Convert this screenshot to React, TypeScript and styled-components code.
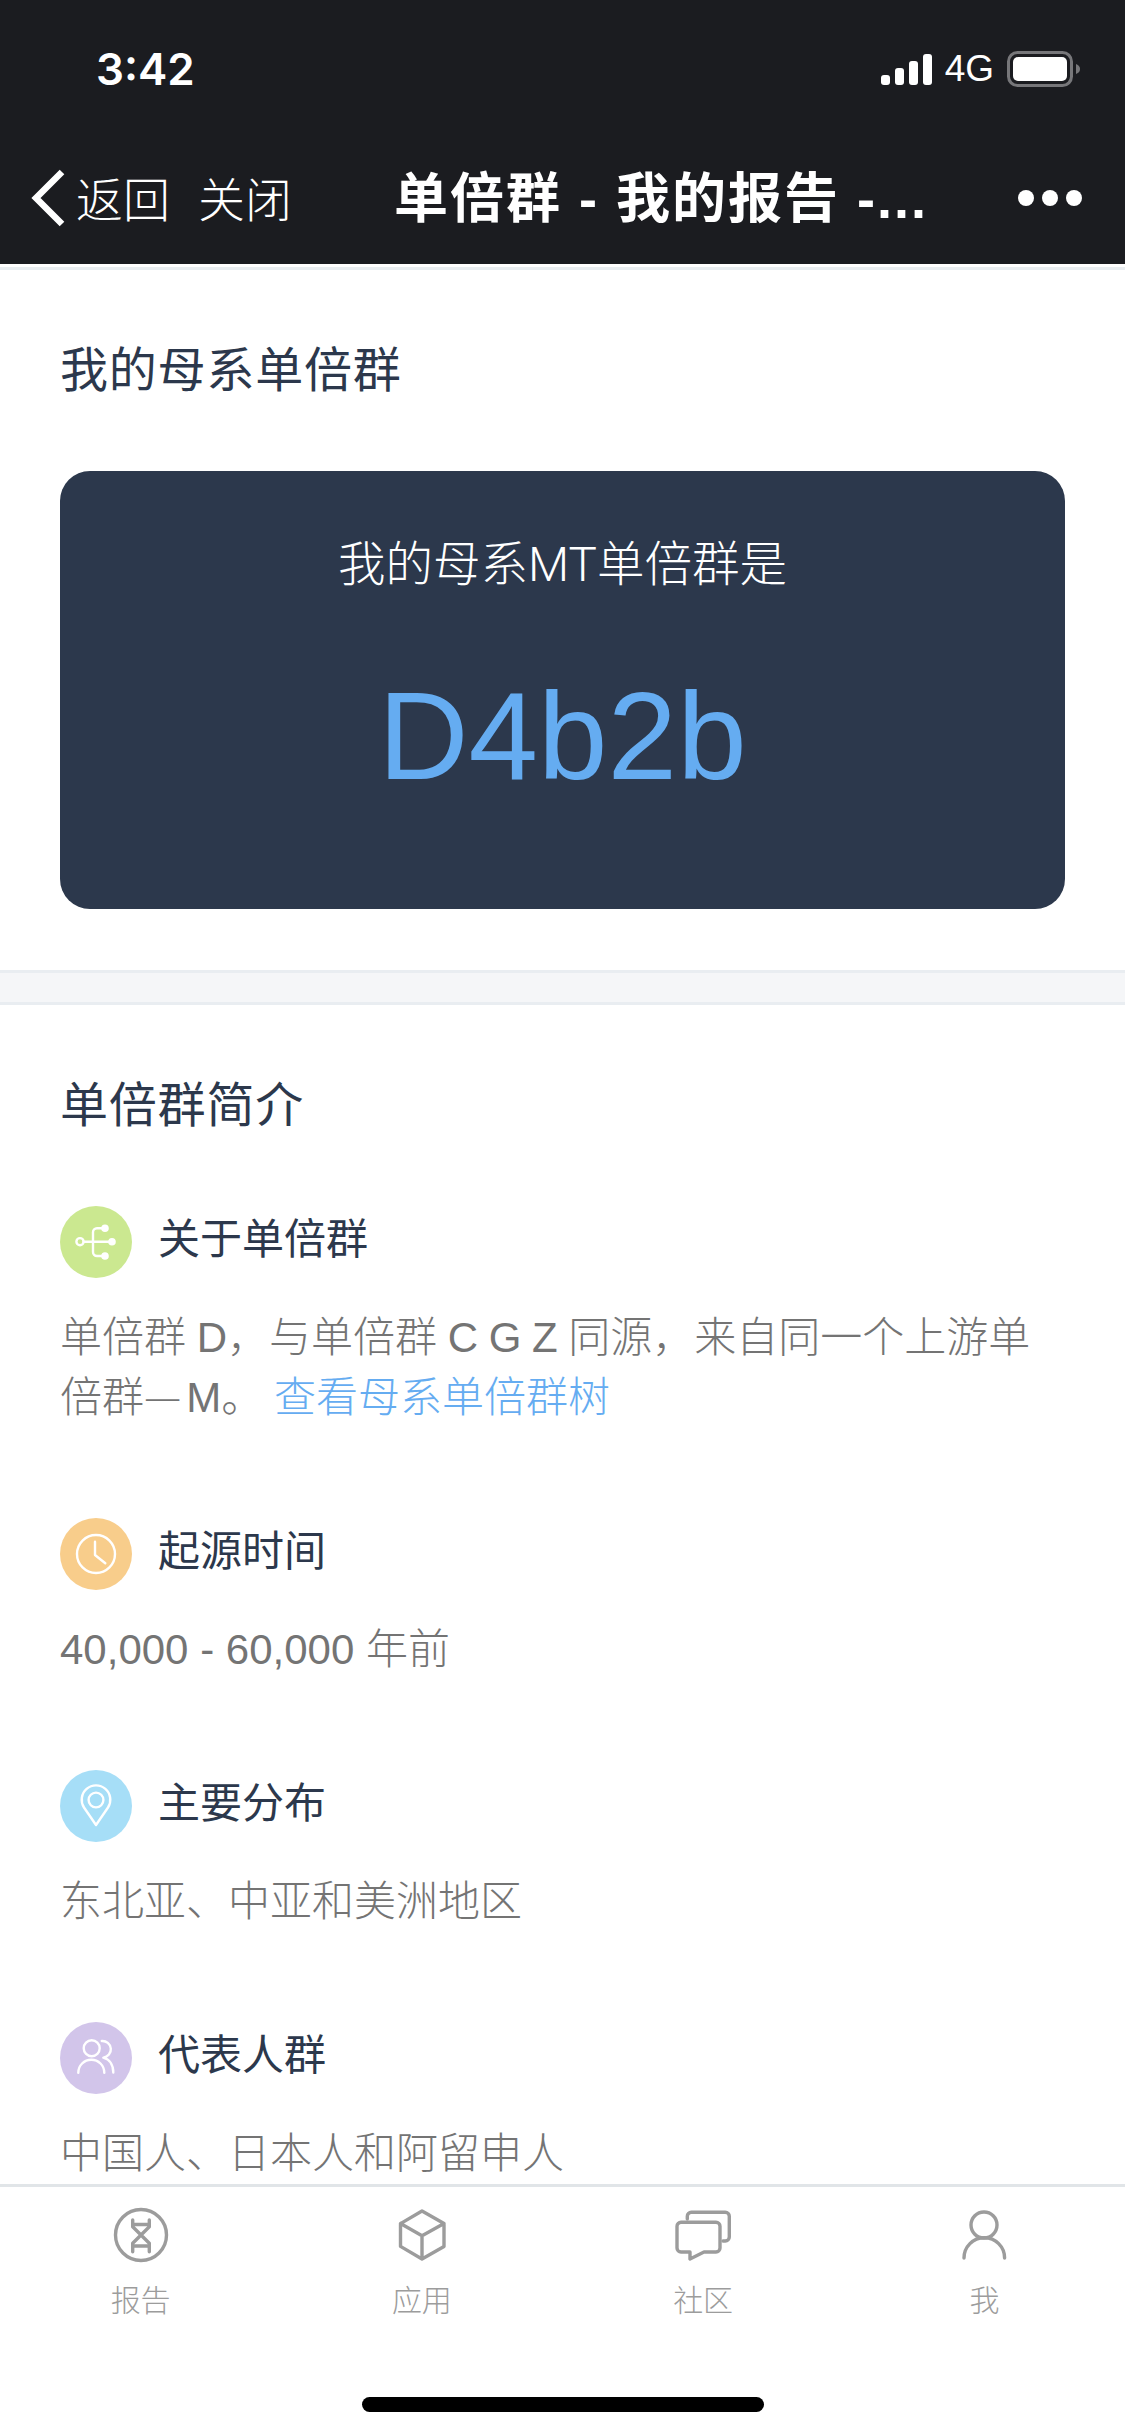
import React from 'react';
import styled, { createGlobalStyle } from 'styled-components';

const GlobalStyle = createGlobalStyle`
  html, body {
    margin: 0;
    padding: 0;
    background: #fff;
  }
  * {
    box-sizing: border-box;
  }
`;

const fontStack = `"Liberation Sans", "Noto Sans CJK SC", sans-serif`;
const lightStack = `Roboto, "Noto Sans CJK SC", sans-serif`;

const Page = styled.div`
  width: 1125px;
  height: 2436px;
  display: flex;
  flex-direction: column;
  overflow: hidden;
  background: #fff;
  font-family: ${fontStack};
`;

const Header = styled.header`
  height: 264px;
  flex: none;
  background: #1b1c20;
  color: #fff;
`;

const StatusBar = styled.div`
  height: 132px;
  padding: 44px 44px 0 96px;
  display: flex;
  justify-content: space-between;
  align-items: flex-start;
`;

const Time = styled.span`
  font-family: Inter, sans-serif;
  font-size: 44px;
  line-height: 50px;
  font-weight: 600;
`;

const StatusIcons = styled.div`
  display: flex;
  align-items: center;
  height: 50px;
  gap: 13px;
`;

const Signal = styled.div`
  display: flex;
  align-items: flex-end;
  gap: 5px;
  height: 31px;
`;

const SignalBar = styled.i<{ $h: number }>`
  width: 9px;
  height: ${p => p.$h}px;
  border-radius: 3px;
  background: #fff;
`;

const NetworkLabel = styled.span`
  font-size: 37px;
  line-height: 40px;
`;

const Battery = styled.svg`
  width: 74px;
  height: 36px;
  display: block;
`;

const NavBar = styled.nav`
  height: 132px;
  padding: 0 43px 0 30px;
  display: flex;
  align-items: center;
`;

const Chevron = styled.svg`
  width: 36px;
  height: 58px;
  flex: none;
  margin-right: 10px;
`;

const NavLink = styled.span`
  font-size: 47px;
  line-height: 60px;
  font-weight: 300;
  margin: 5px 28px 0 0;
`;

const NavTitle = styled.h1`
  margin: 2px 0 0 74px;
  font-size: 54px;
  line-height: 70px;
  font-weight: 700;
  letter-spacing: 2px;
  white-space: nowrap;
`;

const MoreDots = styled.div`
  margin-left: auto;
  display: flex;
  gap: 8px;
`;

const Dot = styled.i`
  width: 16px;
  height: 16px;
  border-radius: 50%;
  background: #fff;
`;

const Content = styled.main`
  flex: 1;
  min-height: 0;
  overflow: hidden;
  border-top: 3px solid #fff;
`;

const Section = styled.section<{ $pad: string }>`
  padding: ${p => p.$pad};
`;

const TopLine = styled.div`
  height: 3px;
  background: #e9edf1;
`;

const SectionTitle = styled.h2`
  margin: 0;
  font-size: 48px;
  line-height: 60px;
  font-weight: 400;
  letter-spacing: 0.8px;
  color: #2c384c;
`;

const HaploCard = styled.div`
  margin-top: 70px;
  height: 438px;
  border-radius: 30px;
  background: #2c384c;
  color: #fff;
  text-align: center;
  padding-top: 64px;
`;

const CardLabel = styled.div`
  font-family: ${lightStack};
  font-size: 47.5px;
  line-height: 60px;
  font-weight: 300;
`;

const HaploName = styled.div`
  margin-top: 66px;
  font-size: 125px;
  line-height: 150px;
  color: #65acf1;
`;

const Separator = styled.div`
  height: 35px;
  background: #f5f6f8;
  border-top: 3px solid #e9edf1;
  border-bottom: 3px solid #e9edf1;
`;

const InfoList = styled.div`
  margin-top: 70px;
  display: flex;
  flex-direction: column;
  gap: 90px;
`;

const InfoItem = styled.article`
  display: flex;
  flex-direction: column;
  gap: 30px;
`;

const InfoHead = styled.div`
  display: flex;
  align-items: center;
  gap: 26px;
`;

const IconCircle = styled.div<{ $color: string }>`
  width: 72px;
  height: 72px;
  border-radius: 50%;
  flex: none;
  background: ${p => p.$color};
`;

const CircleSvg = styled.svg`
  display: block;
  width: 72px;
  height: 72px;
  fill: none;
  stroke: #fff;
  stroke-width: 2.4;
  stroke-linecap: round;
  stroke-linejoin: round;
`;

const InfoTitle = styled.h3`
  margin: 0;
  padding-bottom: 4px;
  font-size: 42px;
  line-height: 60px;
  font-weight: 400;
  color: #2c384c;
`;

const InfoText = styled.p<{ $tight?: boolean }>`
  margin: 0;
  font-size: 42px;
  line-height: 60px;
  font-weight: 300;
  word-spacing: ${p => (p.$tight ? '-1px' : '0')};
  color: #747474;
`;

const CjkDash = styled.span`
  font-family: "Noto Sans CJK SC", sans-serif;
  line-height: 0;
  margin-right: 5px;
`;

const InfoLink = styled.a`
  color: #65acf1;
  text-decoration: none;
`;

const TabBar = styled.footer`
  height: 252px;
  flex: none;
  background: #fff;
  border-top: 3px solid #e1e5e8;
  display: flex;
  flex-direction: column;
`;

const TabRow = styled.div`
  display: grid;
  grid-template-columns: repeat(4, 1fr);
  padding-top: 18px;
`;

const Tab = styled.div`
  display: flex;
  flex-direction: column;
  align-items: center;
  gap: 18px;
`;

const TabSvg = styled.svg`
  display: block;
  width: 60px;
  height: 60px;
  fill: none;
  stroke: #9c9c9c;
  stroke-width: 3.4;
  stroke-linecap: round;
  stroke-linejoin: round;
`;

const TabLabel = styled.span`
  font-size: 30px;
  line-height: 36px;
  font-weight: 300;
  color: #9c9c9c;
`;

const HomeIndicator = styled.div`
  width: 402px;
  height: 15px;
  margin: 78px auto 0;
  border-radius: 8px;
  background: #000;
`;

const infoItems = [
  {
    title: '关于单倍群',
    color: '#cbe890',
    tight: true,
    icon: (
      <>
        <circle cx="20" cy="35.7" r="3.6" />
        <path d="M23.6 35.7H52.7M45 22.3H37a4 4 0 0 0-4 4V46a4 4 0 0 0 4 4h8" />
        <circle cx="45" cy="22.3" r="2.6" fill="#fff" />
        <circle cx="52" cy="35.7" r="2.6" fill="#fff" />
        <circle cx="45" cy="50" r="2.6" fill="#fff" />
      </>
    ),
    text: (
      <>
        单倍群 D，与单倍群 C G Z 同源，来自同一个上游单<br />
        倍群<CjkDash>—</CjkDash>M。 <InfoLink>查看母系单倍群树</InfoLink>
      </>
    ),
  },
  {
    title: '起源时间',
    color: '#f8cd8b',
    icon: (
      <>
        <circle cx="36" cy="36" r="19" />
        <path d="M35 23.7V37L45.3 45.3" />
      </>
    ),
    text: '40,000 - 60,000 年前',
  },
  {
    title: '主要分布',
    color: '#a6def7',
    icon: (
      <>
        <path d="M36 55L24 37.5a14.3 14.3 0 1 1 24 0Z" />
        <circle cx="36" cy="30" r="7.4" />
      </>
    ),
    text: '东北亚、中亚和美洲地区',
  },
  {
    title: '代表人群',
    color: '#d2c5ea',
    icon: (
      <>
        <circle cx="31.7" cy="26.3" r="8" />
        <path d="M18.3 50.7a13 13 0 0 1 26 0" />
        <path d="M41.7 19a8 8 0 0 1 1.6 16.6c6 1.4 10 7 10 15" />
      </>
    ),
    text: '中国人、日本人和阿留申人',
  },
];

const tabs = [
  {
    label: '报告',
    icon: (
      <>
        <circle cx="30" cy="30" r="25.5" />
        <path d="M21.7 15v6.7L38.3 38.3V46.7M38.3 15v6.7L21.7 38.3V46.7M21.7 19.5H38.3M21.7 41H38.3" />
      </>
    ),
  },
  {
    label: '应用',
    icon: <path d="M30 6L52 18.6V41.4L30 54L8.5 41.4V18.6ZM8.5 18.6L30 30.7L52 18.6M30 30.7V54" />,
  },
  {
    label: '社区',
    icon: (
      <>
        <path d="M8 17.3H43a4 4 0 0 1 4 4V43a4 4 0 0 1-4 4H31L17 54V47H8a4 4 0 0 1-4-4V21.3a4 4 0 0 1 4-4Z" />
        <path d="M14.3 14V11.3a4 4 0 0 1 4-4H52.3a4 4 0 0 1 4 4V32a4 4 0 0 1-4 4H50" />
      </>
    ),
  },
  {
    label: '我',
    icon: (
      <>
        <circle cx="30" cy="20" r="13" />
        <path d="M10 53a20.3 20.3 0 0 1 40.6 0" />
      </>
    ),
  },
];

const App: React.FC = () => {
  return (
    <Page>
      <GlobalStyle />
      <Header>
        <StatusBar>
          <Time>3:42</Time>
          <StatusIcons>
            <Signal>
              {[10, 17, 24, 31].map(h => <SignalBar key={h} $h={h} />)}
            </Signal>
            <NetworkLabel>4G</NetworkLabel>
            <Battery viewBox="0 0 74 36">
              <rect x="1.5" y="1.5" width="63" height="33" rx="9" fill="none" stroke="#77777a" strokeWidth="3" />
              <rect x="6" y="6" width="54" height="24" rx="5" fill="#fff" />
              <path d="M69 13c3 1 4 3 4 5s-1 4-4 5Z" fill="#77777a" />
            </Battery>
          </StatusIcons>
        </StatusBar>
        <NavBar>
          <Chevron viewBox="0 0 36 58">
            <path d="M32 3L6 29L32 55" fill="none" stroke="#fff" strokeWidth="6.5" />
          </Chevron>
          <NavLink>返回</NavLink>
          <NavLink>关闭</NavLink>
          <NavTitle>单倍群 - 我的报告 -...</NavTitle>
          <MoreDots>
            <Dot />
            <Dot />
            <Dot />
          </MoreDots>
        </NavBar>
      </Header>
      <Content>
        <TopLine />
        <Section $pad="71px 60px 61px">
          <SectionTitle>我的母系单倍群</SectionTitle>
          <HaploCard>
            <CardLabel>我的母系MT单倍群是</CardLabel>
            <HaploName>D4b2b</HaploName>
          </HaploCard>
        </Section>
        <Separator />
        <Section $pad="71px 60px 0">
          <SectionTitle>单倍群简介</SectionTitle>
          <InfoList>
            {infoItems.map(item => (
              <InfoItem key={item.title}>
                <InfoHead>
                  <IconCircle $color={item.color}>
                    <CircleSvg viewBox="0 0 72 72">{item.icon}</CircleSvg>
                  </IconCircle>
                  <InfoTitle>{item.title}</InfoTitle>
                </InfoHead>
                <InfoText $tight={item.tight}>{item.text}</InfoText>
              </InfoItem>
            ))}
          </InfoList>
        </Section>
      </Content>
      <TabBar>
        <TabRow>
          {tabs.map(tab => (
            <Tab key={tab.label}>
              <TabSvg viewBox="0 0 60 60">{tab.icon}</TabSvg>
              <TabLabel>{tab.label}</TabLabel>
            </Tab>
          ))}
        </TabRow>
        <HomeIndicator />
      </TabBar>
    </Page>
  );
};

export default App;
